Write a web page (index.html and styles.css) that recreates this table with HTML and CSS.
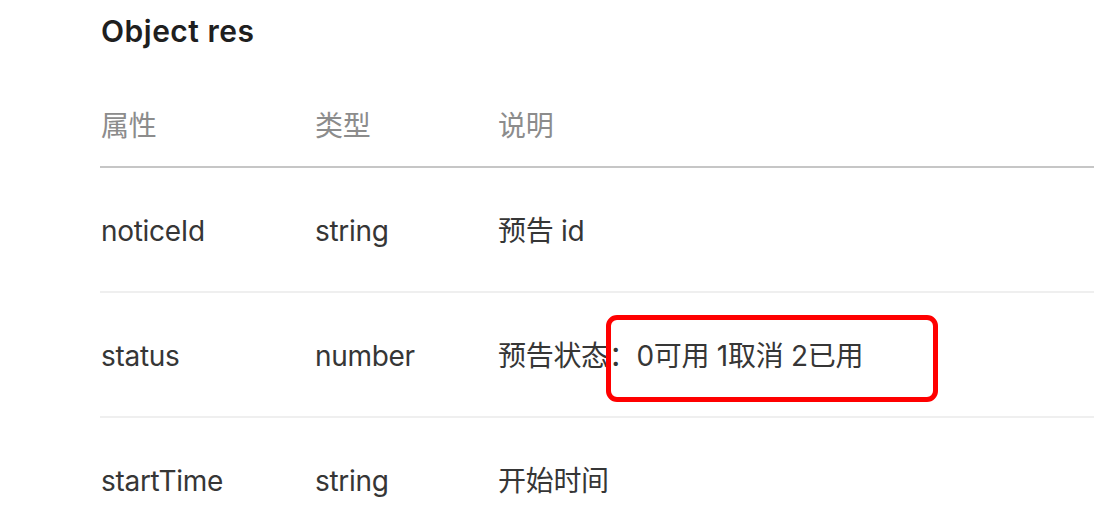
FILE: index.html
```html
<!DOCTYPE html>
<html>
<head>
    <title>Object res</title>
    <link rel="stylesheet" href="styles.css">
</head>
<body>
    <div class="doc">
        <h2 class="doc-title">Object res</h2>
        <table class="props">
            <thead>
                <tr>
                    <th class="col-name">属性</th>
                    <th class="col-type">类型</th>
                    <th>说明</th>
                </tr>
            </thead>
            <tbody>
                <tr>
                    <td>noticeId</td>
                    <td>string</td>
                    <td>预告 id</td>
                </tr>
                <tr>
                    <td>status</td>
                    <td>number</td>
                    <td class="desc">预告状态：0可用 1取消 2已用<span class="mark"></span></td>
                </tr>
                <tr>
                    <td>startTime</td>
                    <td>string</td>
                    <td>开始时间</td>
                </tr>
            </tbody>
        </table>
    </div>
</body>
</html>
```

FILE: styles.css
```css
html, body { margin: 0; padding: 0; background: #fff; }
body { font-family: Inter, "Noto Sans CJK SC", sans-serif; color: #333; overflow: hidden; }
.doc { padding-left: 100px; }
.doc-title { font-size: 30px; font-weight: 600; letter-spacing: 0.5px; line-height: 36px; margin: 13px 0 37px 1px; color: #1f1f1f; }
.props { border-collapse: collapse; width: 100%; font-size: 28px; letter-spacing: -0.3px; }
.props th, .props td { text-align: left; padding: 0; line-height: 40px; vertical-align: middle; }
.props th { color: #8c8c8c; font-weight: normal; padding: 20px 0; border-bottom: 2px solid #c6c6c6; }
.props td { padding: 43px 0 40px; border-bottom: 2px solid #efefef; color: #363636; }
.props tbody tr:last-child td { border-bottom: none; }
.props td:first-child, .props th:first-child { padding-left: 1px; }
.col-name { width: 214px; }
.col-type { width: 183px; }
.desc { position: relative; }
.mark { position: absolute; left: 108px; top: 22px; width: 322px; height: 77px; border: 5px solid #ff0000; border-radius: 11px; }
```
